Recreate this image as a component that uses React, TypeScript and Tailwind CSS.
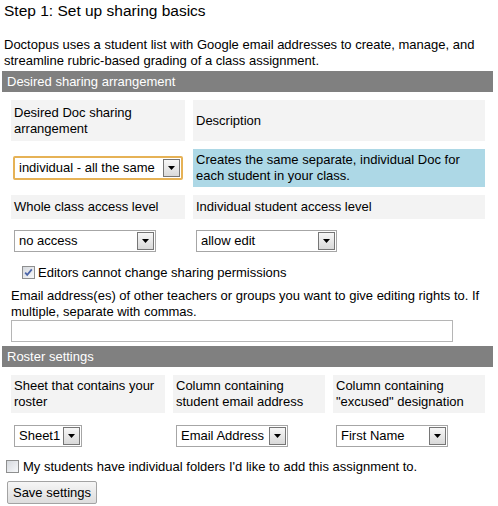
import React from "react";

const Arrow = () => (
    <div className="w-[17px] h-[18px] mr-[1px] border border-[#767676] bg-gradient-to-b from-[#f7f7f7] to-[#d9d9d9] flex items-center justify-center">
        <svg width="7" height="4" viewBox="0 0 7 4">
            <path d="M0 0h7L3.5 4z" fill="#000" />
        </svg>
    </div>
);

const Select = ({ value, width, focused }: { value: string; width: string; focused?: boolean }) => (
    <div
        className={
            focused
                ? `${width} h-[24px] flex items-center bg-white border-2 border-[#e6b256] rounded-[2px]`
                : `${width} h-[22px] flex items-center bg-white border border-[#a6a6a6]`
        }
    >
        <span className="flex-1 pl-[4px] whitespace-nowrap overflow-hidden">{value}</span>
        <Arrow />
    </div>
);

const Check = ({ checked }: { checked?: boolean }) => (
    <div className="w-[13px] h-[13px] border border-[#8e8f8f] bg-gradient-to-br from-[#d6d9de] to-[#f7f8fa] flex items-center justify-center shrink-0">
        {checked && (
            <svg width="9" height="9" viewBox="0 0 9 9">
                <path d="M1.2 4.6l2 2.3L7.8 1.4" stroke="#4a64a8" strokeWidth="1.7" fill="none" />
            </svg>
        )}
    </div>
);

const Bar = ({ label }: { label: string }) => (
    <div className="ml-[2px] w-[491px] h-[21px] bg-[#808080] text-white flex items-center pl-[5px]">{label}</div>
);

export default function App() {
    return (
        <div
            className="w-[498px] h-[506px] bg-white text-black text-[13px] leading-[16px] overflow-hidden"
            style={{ fontFamily: '"Liberation Sans", Arial, sans-serif' }}
        >
            <h2 className="text-[15.5px] leading-[22px] pl-[4px]">Step 1: Set up sharing basics</h2>
            <p className="mt-[15px] pl-[4px] pr-[10px] mb-[2px]">
                Doctopus uses a student list with Google email addresses to create, manage, and streamline
                rubric-based grading of a class assignment.
            </p>
            <Bar label="Desired sharing arrangement" />

            <div className="ml-[3px] grid grid-cols-[174px_292px] gap-2 p-2">
                <div className="h-[41px] bg-[#f3f3f3] px-[3px] flex items-center">Desired Doc sharing arrangement</div>
                <div className="h-[41px] bg-[#f3f3f3] px-[3px] flex items-center">Description</div>
                <div className="h-[38px] flex items-center pl-[2px]">
                    <Select value="individual - all the same" width="w-[170px]" focused />
                </div>
                <div className="h-[38px] bg-[#add8e6] px-[3px] flex items-center">
                    Creates the same separate, individual Doc for each student in your class.
                </div>
                <div className="h-[24px] bg-[#f3f3f3] px-[3px] flex items-center">Whole class access level</div>
                <div className="h-[24px] bg-[#f3f3f3] px-[3px] flex items-center">Individual student access level</div>
                <div className="h-[28px] flex items-center pl-[3px]">
                    <Select value="no access" width="w-[142px]" />
                </div>
                <div className="h-[28px] flex items-center pl-[3px]">
                    <Select value="allow edit" width="w-[141px]" />
                </div>
            </div>

            <div className="flex items-center h-[19px] pl-[22px] gap-[3px]">
                <Check checked />
                <span>Editors cannot change sharing permissions</span>
            </div>
            <div className="pl-[11px] pr-[2px] mt-[6px]">
                Email address(es) of other teachers or groups you want to give editing rights to. If multiple,
                separate with commas.
            </div>
            <div className="ml-[11px] w-[442px] h-[22px] border border-[#b5b5b5] bg-white" />
            <div className="h-[4px]" />
            <Bar label="Roster settings" />

            <div className="ml-[3px] grid grid-cols-[154px_152px_152px] gap-2 p-2">
                <div className="h-[38px] bg-[#f3f3f3] px-[3px] flex items-center">Sheet that contains your roster</div>
                <div className="h-[38px] bg-[#f3f3f3] px-[3px] flex items-center">Column containing student email address</div>
                <div className="h-[38px] bg-[#f3f3f3] px-[3px] flex items-center">Column containing "excused" designation</div>
                <div className="h-[30px] flex items-center pl-[3px]">
                    <Select value="Sheet1" width="w-[68px]" />
                </div>
                <div className="h-[30px] flex items-center pl-[3px]">
                    <Select value="Email Address" width="w-[112px]" />
                </div>
                <div className="h-[30px] flex items-center pl-[3px]">
                    <Select value="First Name" width="w-[112px]" />
                </div>
            </div>

            <div className="flex items-center h-[15px] pl-[6px] gap-[4px]">
                <Check />
                <span>My students have individual folders I'd like to add this assignment to.</span>
            </div>
            <button className="ml-[7px] mt-[7px] w-[90px] h-[23px] border border-[#a3a3a3] rounded-[2px] bg-gradient-to-b from-[#f6f6f6] to-[#dddddd] text-[13px]">
                Save settings
            </button>
        </div>
    );
}
